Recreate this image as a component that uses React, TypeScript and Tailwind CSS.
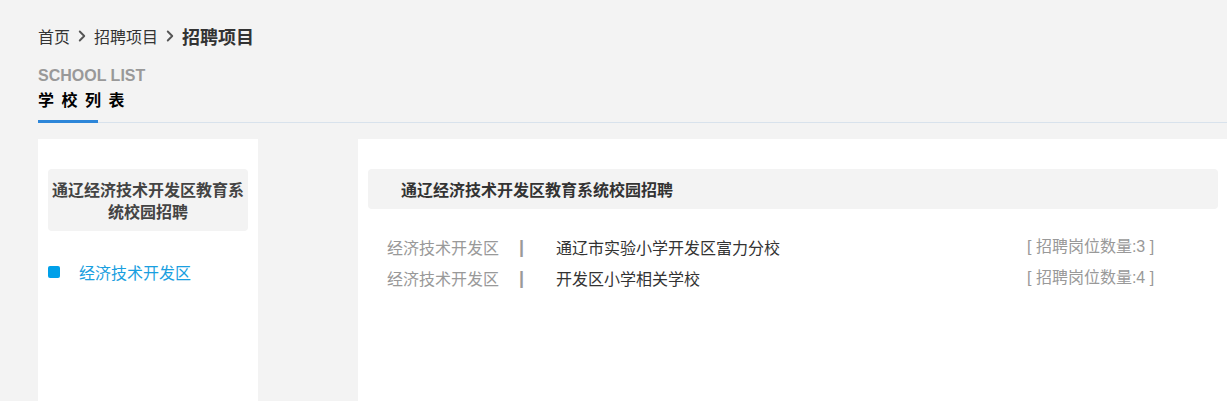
import { ChevronRight } from 'lucide-react'

const SCHOOLS = [
  { area: '经济技术开发区', name: '通辽市实验小学开发区富力分校', count: 3 },
  { area: '经济技术开发区', name: '开发区小学相关学校', count: 4 },
]

const FONT = "font-['Microsoft_YaHei','Noto_Sans_CJK_SC',sans-serif]"

export default function App() {
  return (
    <div className={`${FONT} h-[401px] w-[1227px] overflow-hidden bg-[#f3f3f3]`}>
      {/* Breadcrumb */}
      <div className="flex items-center pl-[38px] pt-[24px] h-[24px] box-content text-[16px] text-[#333]">
        <span>首页</span>
        <ChevronRight className="mx-[3px] h-[18px] w-[18px] text-[#555]" strokeWidth={2.5} />
        <span>招聘项目</span>
        <ChevronRight className="mx-[3px] h-[18px] w-[18px] text-[#555]" strokeWidth={2.5} />
        <span className="text-[18px] font-bold">招聘项目</span>
      </div>

      {/* Section title */}
      <div className="pl-[38px] pt-[19px]">
        <div className="font-['Liberation_Sans',sans-serif] text-[16px] font-bold leading-[18px] text-[#999]">SCHOOL LIST</div>
        <div className="mt-[4px] text-[16px] font-bold leading-[20px] tracking-[7.5px] text-black">学校列表</div>
      </div>
      <div className="mt-[11px] ml-[38px] flex items-end">
        <div className="h-[3px] w-[60px] bg-[#2d86d9]" />
        <div className="h-[1px] flex-1 bg-[#d8e2ec]" />
      </div>

      {/* Panels */}
      <div className="mt-[16px] flex pl-[38px]">
        <div className="h-[262px] w-[220px] bg-white px-[10px] pt-[30px]">
          <div className="flex h-[62px] flex-col items-center justify-center rounded-[4px] bg-[#f3f3f3] text-center text-[16px] font-bold leading-[22px] text-[#444]">
            <span>通辽经济技术开发区教育系</span>
            <span>统校园招聘</span>
          </div>
          <div className="mt-[31px] flex h-[20px] items-center text-[16px] leading-[20px] text-[#1a9fe0]">
            <span className="h-[12px] w-[12px] rounded-[2px] bg-[#00a0e9]" />
            <span className="ml-[19px]">经济技术开发区</span>
          </div>
        </div>

        <div className="ml-[100px] h-[262px] flex-1 bg-white pl-[10px] pr-[9px] pt-[30px]">
          <div className="flex h-[40px] items-center rounded-[4px] bg-[#f3f3f3] pl-[33px] text-[16px] font-bold text-[#333]">
            通辽经济技术开发区教育系统校园招聘
          </div>
          <div className="mt-[22px] pl-[19px] text-[16px]">
            {SCHOOLS.map((s) => (
              <div key={s.name} className="flex h-[31px] items-center">
                <span className="w-[132px] text-[#999]">{s.area}</span>
                <span className="w-[37px] font-['Liberation_Sans',sans-serif] text-[18px] font-bold leading-[20px] text-[#999]">|</span>
                <span className="flex-1 text-[#333]">{s.name}</span>
                <span className="w-[191px] font-['Liberation_Sans','Noto_Sans_CJK_SC',sans-serif] text-[#999]">
                  [ 招聘岗位数量:{s.count} ]
                </span>
              </div>
            ))}
          </div>
        </div>
      </div>
    </div>
  )
}
